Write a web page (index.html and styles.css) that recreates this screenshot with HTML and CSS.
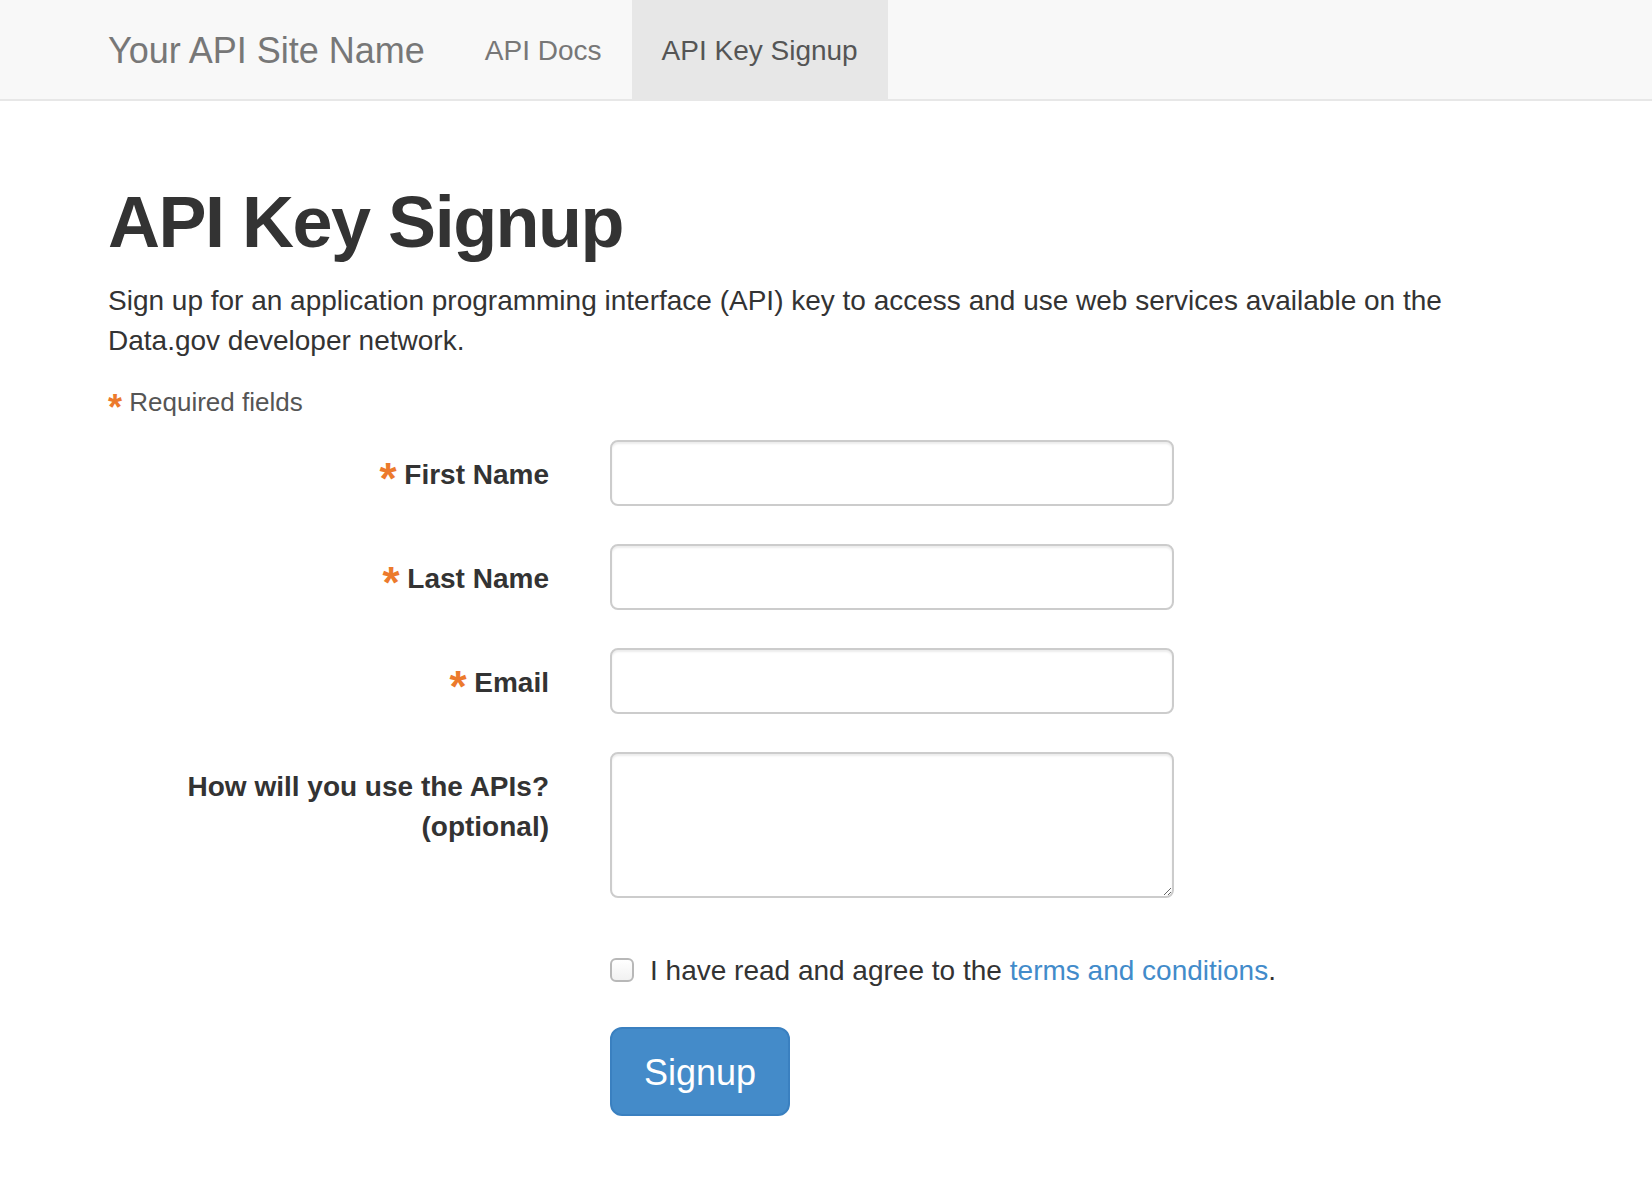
FILE: index.html
```html
<!DOCTYPE html>
<html lang="en">
<head>
<meta charset="utf-8">
<title>API Key Signup</title>
<link rel="stylesheet" href="styles.css">
</head>
<body>
<header class="navbar">
  <div class="container nav-inner">
    <a class="brand" href="#">Your API Site Name</a>
    <nav class="nav">
      <a class="nav-link" href="#">API Docs</a>
      <a class="nav-link active" href="#">API Key Signup</a>
    </nav>
  </div>
</header>
<main class="container">
  <h1 class="title">API Key Signup</h1>
  <p class="lead">Sign up for an application programming interface (API) key to access and use web services available on the Data.gov developer network.</p>
  <p class="required-note"><span class="req req-small">*</span> Required fields</p>
  <form class="signup-form">
    <div class="form-group">
      <label class="control-label" for="first"><span class="req">*</span> First Name</label>
      <input class="form-control" id="first" type="text">
    </div>
    <div class="form-group">
      <label class="control-label" for="last"><span class="req">*</span> Last Name</label>
      <input class="form-control" id="last" type="text">
    </div>
    <div class="form-group">
      <label class="control-label" for="email"><span class="req">*</span> Email</label>
      <input class="form-control" id="email" type="email">
    </div>
    <div class="form-group group-textarea">
      <label class="control-label" for="use">How will you use the APIs?<br>(optional)</label>
      <textarea class="form-control textarea" id="use"></textarea>
    </div>
    <div class="form-group group-check">
      <label class="checkbox-label"><input class="checkbox" type="checkbox"> I have read and agree to the <a class="link" href="#">terms and conditions</a>.</label>
    </div>
    <div class="form-group group-submit">
      <button class="btn" type="submit">Signup</button>
    </div>
  </form>
</main>
</body>
</html>
```
FILE: styles.css
```css
html, body {
  margin: 0;
  padding: 0;
  background: #fff;
}
body {
  font-family: "Liberation Sans", Arial, Helvetica, sans-serif;
  font-size: 28px;
  line-height: 40px;
  color: #333;
}
.container {
  max-width: 1436px;
  margin: 0 auto;
  padding: 0 30px;
}
.navbar {
  height: 99px;
  background: #f8f8f8;
  border-bottom: 2px solid #e7e7e7;
}
.nav-inner {
  display: flex;
  height: 99px;
  align-items: stretch;
}
.brand {
  display: flex;
  align-items: center;
  margin-left: -30px;
  padding: 2px 30px 0;
  font-size: 36px;
  line-height: 40px;
  color: #777;
  text-decoration: none;
}
.nav {
  display: flex;
  align-items: stretch;
}
.nav-link {
  display: flex;
  align-items: center;
  padding: 2px 30px 0;
  color: #777;
  text-decoration: none;
}
.nav-link.active {
  background: #e7e7e7;
  color: #555;
}
.title {
  margin: 82px 0 18px;
  font-size: 72px;
  line-height: 79px;
  font-weight: bold;
  letter-spacing: -1.5px;
  color: #333;
}
.lead {
  margin: 0 0 19px;
  padding-top: 1px;
}
.required-note {
  margin: 0;
  padding-top: 2px;
  font-size: 26px;
  line-height: 40px;
  color: #555;
}
.req {
  color: #ec7a2c;
  font-weight: bold;
  font-size: 44px;
  line-height: 0;
  vertical-align: -10px;
}
.req-small {
  font-size: 36px;
  vertical-align: -9px;
}
.signup-form {
  margin-top: 18px;
}
.form-group {
  display: grid;
  grid-template-columns: 441px 564px;
  column-gap: 61px;
  margin-bottom: 38px;
}
.control-label {
  text-align: right;
  font-weight: bold;
  padding-top: 15px;
}
.form-control {
  box-sizing: border-box;
  width: 564px;
  height: 66px;
  margin: 0;
  border: 2px solid #ccc;
  border-radius: 8px;
  background: #fff;
  box-shadow: inset 0 2px 2px rgba(0, 0, 0, 0.075);
  font-family: inherit;
  font-size: 28px;
  padding: 12px 24px;
}
.textarea {
  height: 146px;
  resize: vertical;
}
.group-textarea {
  margin-bottom: 51px;
}
.group-check,
.group-submit {
  grid-template-columns: 564px;
  padding-left: 502px;
}
.group-check {
  margin-bottom: 36px;
}
.checkbox-label {
  display: flex;
  align-items: center;
  white-space: nowrap;
  height: 40px;
  padding-top: 2px;
}
.checkbox {
  appearance: none;
  -webkit-appearance: none;
  box-sizing: border-box;
  width: 24px;
  height: 24px;
  margin: -2px 16px 0 0;
  border: 2px solid #b8b8b8;
  border-radius: 6px;
  background: linear-gradient(#ffffff, #f1f1f1);
  flex: none;
}
.link {
  color: #428bca;
  text-decoration: none;
  margin-left: 8px;
}
.btn {
  box-sizing: border-box;
  justify-self: start;
  height: 89px;
  padding: 2px 32px 0;
  border: 2px solid #3a80c0;
  border-radius: 12px;
  background: #448bc9;
  color: #fff;
  font-family: inherit;
  font-size: 36px;
  line-height: 40px;
}
```
